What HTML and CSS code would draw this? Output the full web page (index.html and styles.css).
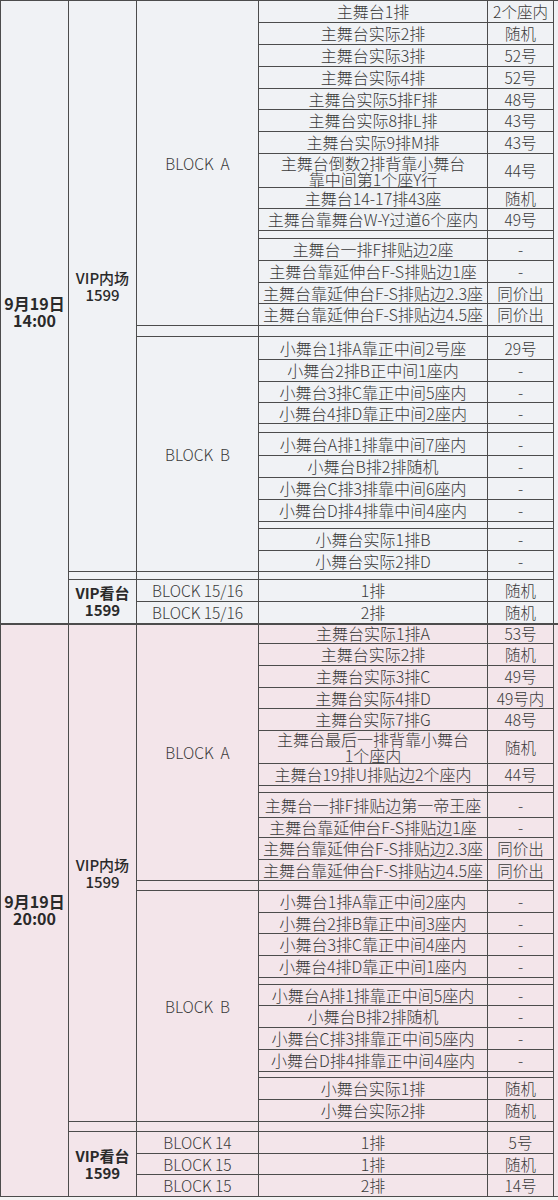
FILE: index.html
```html
<!DOCTYPE html>
<html lang="zh">
<head>
<meta charset="utf-8">
<link rel="stylesheet" href="styles.css">
</head>
<body>
<table class="sheet">
<colgroup>
<col class="c1"><col class="c2"><col class="c3"><col class="c4"><col class="c5"><col class="c6">
</colgroup>
<tbody class="s1">
<tr><td class="date" rowspan="31">9月19日<br>14:00</td><td class="zone" rowspan="28">VIP内场<br>1599</td><td class="blk" rowspan="15">BLOCK&nbsp;&nbsp;A</td><td class="d">主舞台1排</td><td class="v">2个座内</td><td class="edge" rowspan="31"></td></tr>
<tr><td class="d">主舞台实际2排</td><td class="v">随机</td></tr>
<tr><td class="d">主舞台实际3排</td><td class="v">52号</td></tr>
<tr><td class="d">主舞台实际4排</td><td class="v">52号</td></tr>
<tr class="h21"><td class="d">主舞台实际5排F排</td><td class="v">48号</td></tr>
<tr><td class="d">主舞台实际8排L排</td><td class="v">43号</td></tr>
<tr><td class="d">主舞台实际9排M排</td><td class="v">43号</td></tr>
<tr class="h34"><td class="d two">主舞台倒数2排背靠小舞台<br>靠中间第1个座Y行</td><td class="v">44号</td></tr>
<tr class="h21"><td class="d">主舞台14-17排43座</td><td class="v">随机</td></tr>
<tr><td class="d">主舞台靠舞台W-Y过道6个座内</td><td class="v">49号</td></tr>
<tr class="sp8"><td></td><td></td></tr>
<tr><td class="d">主舞台一排F排贴边2座</td><td class="v">-</td></tr>
<tr><td class="d">主舞台靠延伸台F-S排贴边1座</td><td class="v">-</td></tr>
<tr class="h21"><td class="d">主舞台靠延伸台F-S排贴边2.3座</td><td class="v">同价出</td></tr>
<tr><td class="d">主舞台靠延伸台F-S排贴边4.5座</td><td class="v">同价出</td></tr>
<tr class="sp11"><td></td><td></td><td></td></tr>
<tr class="h23"><td class="blk" rowspan="12">BLOCK&nbsp;&nbsp;B</td><td class="d">小舞台1排A靠正中间2号座</td><td class="v">29号</td></tr>
<tr><td class="d">小舞台2排B正中间1座内</td><td class="v">-</td></tr>
<tr class="h21"><td class="d">小舞台3排C靠正中间5座内</td><td class="v">-</td></tr>
<tr class="h21"><td class="d">小舞台4排D靠正中间2座内</td><td class="v">-</td></tr>
<tr class="sp9"><td></td><td></td></tr>
<tr class="h23"><td class="d">小舞台A排1排靠中间7座内</td><td class="v">-</td></tr>
<tr><td class="d">小舞台B排2排随机</td><td class="v">-</td></tr>
<tr><td class="d">小舞台C排3排靠中间6座内</td><td class="v">-</td></tr>
<tr><td class="d">小舞台D排4排靠中间4座内</td><td class="v">-</td></tr>
<tr class="sp7"><td></td><td></td></tr>
<tr><td class="d">小舞台实际1排B</td><td class="v">-</td></tr>
<tr class="h21"><td class="d">小舞台实际2排D</td><td class="v">-</td></tr>
<tr class="sp8"><td></td><td></td><td></td><td></td></tr>
<tr><td class="zone strong" rowspan="2">VIP看台<br>1599</td><td class="blk">BLOCK 15/16</td><td class="d">1排</td><td class="v">随机</td></tr>
<tr><td class="blk">BLOCK 15/16</td><td class="d">2排</td><td class="v">随机</td></tr>
</tbody>
<tbody class="s2">
<tr class="h20 first"><td class="date" rowspan="29">9月19日<br>20:00</td><td class="zone" rowspan="25">VIP内场<br>1599</td><td class="blk" rowspan="12">BLOCK&nbsp;&nbsp;A</td><td class="d">主舞台实际1排A</td><td class="v">53号</td><td class="edge" rowspan="29"></td></tr>
<tr><td class="d">主舞台实际2排</td><td class="v">随机</td></tr>
<tr><td class="d">主舞台实际3排C</td><td class="v">49号</td></tr>
<tr class="h21"><td class="d">主舞台实际4排D</td><td class="v">49号内</td></tr>
<tr><td class="d">主舞台实际7排G</td><td class="v">48号</td></tr>
<tr class="h32"><td class="d two">主舞台最后一排背靠小舞台<br>1个座内</td><td class="v">随机</td></tr>
<tr><td class="d">主舞台19排U排贴边2个座内</td><td class="v">44号</td></tr>
<tr class="sp7"><td></td><td></td></tr>
<tr class="h25"><td class="d">主舞台一排F排贴边第一帝王座</td><td class="v">-</td></tr>
<tr class="h20"><td class="d">主舞台靠延伸台F-S排贴边1座</td><td class="v">-</td></tr>
<tr><td class="d">主舞台靠延伸台F-S排贴边2.3座</td><td class="v">同价出</td></tr>
<tr class="h21"><td class="d">主舞台靠延伸台F-S排贴边4.5座</td><td class="v">同价出</td></tr>
<tr class="sp10"><td></td><td></td><td></td></tr>
<tr><td class="blk" rowspan="12">BLOCK&nbsp;&nbsp;B</td><td class="d">小舞台1排A靠正中间2座内</td><td class="v">-</td></tr>
<tr class="h21"><td class="d">小舞台2排B靠正中间3座内</td><td class="v">-</td></tr>
<tr><td class="d">小舞台3排C靠正中间4座内</td><td class="v">-</td></tr>
<tr><td class="d">小舞台4排D靠正中间1座内</td><td class="v">-</td></tr>
<tr class="sp7"><td></td><td></td></tr>
<tr class="h21"><td class="d">小舞台A排1排靠正中间5座内</td><td class="v">-</td></tr>
<tr><td class="d">小舞台B排2排随机</td><td class="v">-</td></tr>
<tr><td class="d">小舞台C排3排靠正中间5座内</td><td class="v">-</td></tr>
<tr><td class="d">小舞台D排4排靠正中间4座内</td><td class="v">-</td></tr>
<tr class="sp6"><td></td><td></td></tr>
<tr><td class="d">小舞台实际1排</td><td class="v">随机</td></tr>
<tr><td class="d">小舞台实际2排</td><td class="v">随机</td></tr>
<tr class="sp10"><td></td><td></td><td></td><td></td></tr>
<tr><td class="zone strong" rowspan="3">VIP看台<br>1599</td><td class="blk">BLOCK 14</td><td class="d">1排</td><td class="v">5号</td></tr>
<tr class="h21"><td class="blk">BLOCK 15</td><td class="d">1排</td><td class="v">随机</td></tr>
<tr><td class="blk">BLOCK 15</td><td class="d">2排</td><td class="v">14号</td></tr>
</tbody>
</table>
</body>
</html>
```
FILE: styles.css
```css
html, body {
  margin: 0;
  padding: 0;
  background: #f3f3f3;
  overflow: hidden;
}
body {
  width: 558px;
  font-family: "Noto Sans CJK SC", "Noto Sans", sans-serif;
  color: #3a3a3a;
}
.sheet {
  border-collapse: collapse;
  table-layout: fixed;
  width: 566px;
}
.c1 { width: 68px; }
.c2 { width: 68px; }
.c3 { width: 122px; }
.c4 { width: 229px; }
.c5 { width: 66px; }
.c6 { width: 13px; }
.sheet td {
  border: 1px solid #4c4c4c;
  padding: 0;
  text-align: center;
  vertical-align: middle;
  font-size: 16px;
  line-height: 17px;
  font-weight: 300;
  white-space: nowrap;
}
.sheet td.v { font-size: 15.5px; }
.sheet td.blk { font-size: 15.5px; color: #3a3a3a; }
.s1 td { background: #f0f2f5; }
.s2 td { background: #f3e5ea; }
.s2 tr.first td { border-top: 2px solid #4c4c4c; }
.sheet tr { height: 22px; }
.sheet tr.h20 { height: 20px; }
.sheet tr.h21 { height: 21px; }
.sheet tr.h23 { height: 23px; }
.sheet tr.h25 { height: 25px; }
.sheet tr.h32 { height: 32px; }
.sheet tr.h34 { height: 34px; }
.sheet tr.sp6 { height: 6px; }
.sheet tr.sp7 { height: 7px; }
.sheet tr.sp8 { height: 8px; }
.sheet tr.sp9 { height: 9px; }
.sheet tr.sp10 { height: 10px; }
.sheet tr.sp11 { height: 11px; }
.sheet tr[class^="sp"] td { font-size: 0; line-height: 0; }
.sheet td.two { line-height: 16px; }
.sheet td.date {
  font-weight: 700;
  font-size: 16px;
  line-height: 17px;
  color: #2a2a2a;
}
.sheet td.zone {
  font-weight: 500;
  font-size: 15px;
  line-height: 17px;
  color: #2a2a2a;
}
.sheet td.zone.strong { font-weight: 700; }
.sheet td.edge { border-right: none; }
```
